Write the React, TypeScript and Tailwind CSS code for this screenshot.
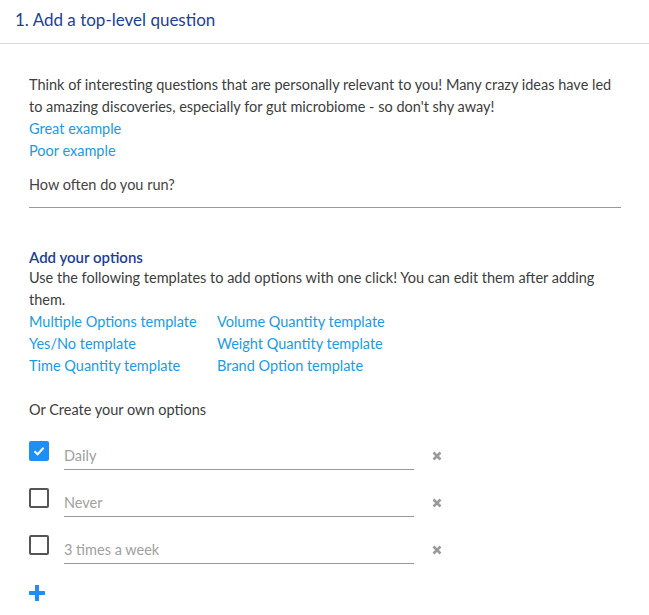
import React from "react";

const XIcon = () => (
  <svg width="10" height="10" viewBox="0 0 10 10">
    <path d="M1.5 1.5 L8.5 8.5 M8.5 1.5 L1.5 8.5" stroke="#9a9a9a" strokeWidth="2.6" strokeLinecap="butt" />
  </svg>
);

const Check = ({ checked }: { checked: boolean }) =>
  checked ? (
    <div className="w-[20px] h-[20px] rounded-[2px] bg-[#1e8ff4] flex items-center justify-center shrink-0 mt-[8px]">
      <svg width="14" height="14" viewBox="0 0 14 14">
        <path d="M2.5 7.2 L5.6 10.2 L11.6 3.8" fill="none" stroke="#fff" strokeWidth="2" />
      </svg>
    </div>
  ) : (
    <div className="w-[20px] h-[20px] rounded-[2px] border-2 border-[#555] shrink-0 mt-[8px]" />
  );

const OptionRow = ({ label, checked }: { label: string; checked: boolean }) => (
  <div className="flex h-[37px]">
    <Check checked={checked} />
    <div className="ml-[15px] w-[350px] h-[37px] border-b border-[#999] pt-[12px] text-[#a0a0a0] leading-[22px]">
      {label}
    </div>
    <div className="ml-[18px] mt-[18px]">
      <XIcon />
    </div>
  </div>
);

export default function App() {
  const link = "text-[#1a9be6] leading-[22px] cursor-pointer";
  return (
    <div className="w-[649px] min-h-[615px] bg-white text-[14.5px] text-[#3d3d3d]" style={{ fontFamily: "Lato, 'Open Sans', sans-serif" }}>
      <div className="h-[44px] border-b border-[#dcdcdc] px-[15px] flex items-center pb-[3px]">
        <span className="text-[17px] text-[#1d3f94]">1. Add a top-level question</span>
      </div>
      <div className="pl-[29px] pr-[28px] pt-[30px]">
        <p className="leading-[22px] whitespace-nowrap">
          Think of interesting questions that are personally relevant to you! Many crazy ideas have led
          <br />
          to amazing discoveries, especially for gut microbiome - so don't shy away!
        </p>
        <div className={link}>Great example</div>
        <div className={link}>Poor example</div>
        <div className="mt-[9px] h-[37px] border-b border-[#999] pt-[3px] leading-[22px] text-[#444]">How often do you run?</div>

        <div className="mt-[39px] text-[15px] font-semibold text-[#1d3f94] leading-[20px]">Add your options</div>
        <p className="leading-[22px] whitespace-nowrap">
          Use the following templates to add options with one click! You can edit them after adding
          <br />
          them.
        </p>
        <div className="grid grid-cols-[188px_auto] w-fit">
          <div className={link}>Multiple Options template</div>
          <div className={link}>Volume Quantity template</div>
          <div className={link}>Yes/No template</div>
          <div className={link}>Weight Quantity template</div>
          <div className={link}>Time Quantity template</div>
          <div className={link}>Brand Option template</div>
        </div>
        <div className="mt-[22px] leading-[22px]">Or Create your own options</div>

        <div className="mt-[12px] flex flex-col gap-[10px]">
          <OptionRow label="Daily" checked />
          <OptionRow label="Never" checked={false} />
          <OptionRow label="3 times a week" checked={false} />
        </div>

        <div className="mt-[21px] ml-[0px]">
          <svg width="16" height="16" viewBox="0 0 16 16">
            <path d="M8 1 V15 M1 8 H15" stroke="#1e8ff4" strokeWidth="4" strokeLinecap="round" />
          </svg>
        </div>
      </div>
    </div>
  );
}
